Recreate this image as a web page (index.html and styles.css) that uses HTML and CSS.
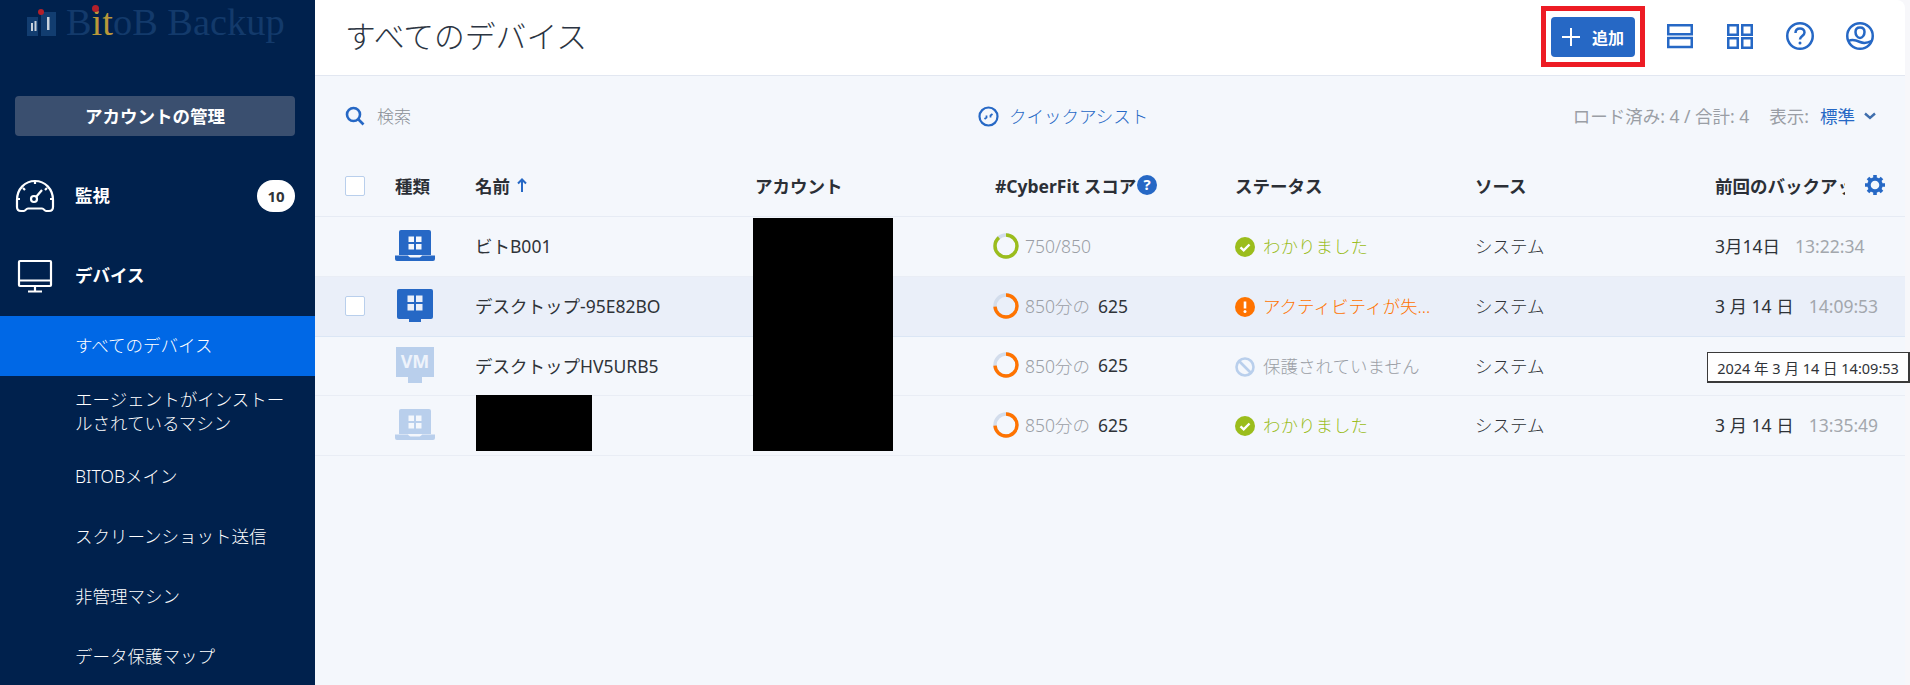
FILE: index.html
```html
<!DOCTYPE html>
<html lang="ja">
<head>
<meta charset="utf-8">
<title>すべてのデバイス</title>
<link rel="stylesheet" href="styles.css">
</head>
<body>
<svg class="defs" width="0" height="0">
  <symbol id="laptop" viewBox="0 0 40 31">
    <path d="M4 2a2 2 0 0 1 2-2h28a2 2 0 0 1 2 2v23H4z" fill="currentColor"/>
    <path d="M0 25.500h13c1 1.500 2 2 3 2h8c1 0 2-.5 3-2h13V29a2 2 0 0 1-2 2H2a2 2 0 0 1-2-2z" fill="currentColor"/>
    <path d="M13.500 6.500h5.500V12h-5.500zM21 6.500h5.500V12H21zM13.500 14h5.500v5.500h-5.500zM21 14h5.500v5.500H21z" fill="#f4f7fc"/>
  </symbol>
  <symbol id="ok" viewBox="0 0 20 20">
    <circle cx="10" cy="10" r="10" fill="#9bbd1c"/>
    <path d="M5.500 10.300l3.200 3 5.800-5.800" fill="none" stroke="#fff" stroke-width="2.400"/>
  </symbol>
  <symbol id="ring" viewBox="0 0 26 26">
    <circle cx="13" cy="13" r="11" fill="none" stroke="#d3ddec" stroke-width="3.400"/>
    <circle cx="13" cy="13" r="11" fill="none" stroke="#ff7300" stroke-width="3.400" stroke-dasharray="50.800 69.100" transform="rotate(-90 13 13)"/>
  </symbol>
</svg>
<div class="app">
  <aside class="sidebar">
    <div class="logo">
      <svg class="logo-mark" width="30" height="30" viewBox="0 0 30 30">
        <rect x="0" y="11" width="11" height="19" fill="#123d70"/>
        <rect x="14" y="6" width="15" height="24" fill="#123d70"/>
        <circle cx="14" cy="6" r="3" fill="#b3202a"/>
        <rect x="4" y="17" width="2" height="8" fill="#c8d2dc"/>
        <rect x="7.500" y="15" width="2" height="10" fill="#c8d2dc"/>
        <rect x="20" y="11" width="2.500" height="13" fill="#c8d2dc"/>
      </svg>
      <span class="logo-text">B<span class="logo-gold">it</span>oB Backup<i class="logo-dot"></i></span>
    </div>
    <button class="account-btn"><span>アカウントの管理</span></button>
    <nav class="nav">
      <div class="nav-main">
        <svg class="nav-icon" width="40" height="34" viewBox="0 0 40 34" fill="none" stroke="#fff" stroke-width="2.200">
          <path d="M9 32H6c-2.500 0-4-1.500-4-4v-7C2 10 10 2 20 2s18 8 18 19v7c0 2.500-1.500 4-4 4h-3c-1.500 0-2-2.500-4-2.500H13C11 29.500 10.500 32 9 32z"/>
          <circle cx="19" cy="20" r="3"/>
          <path d="M21 18l6-7M20 2v3M2 20h3M35 20h3M8 9l2 2M32 9l-2 2"/>
        </svg>
        <span class="nav-label">監視</span>
        <span class="badge">10</span>
      </div>
      <div class="nav-main">
        <svg class="nav-icon" width="40" height="34" viewBox="0 0 40 34" fill="none" stroke="#fff" stroke-width="2.200">
          <rect x="4" y="2" width="32" height="25" rx="1"/>
          <path d="M4 21.500h32M20 27v5M13 32.500h14"/>
        </svg>
        <span class="nav-label">デバイス</span>
      </div>
      <a class="nav-sub active">すべてのデバイス</a>
      <a class="nav-sub tall">エージェントがインストールされているマシン</a>
      <a class="nav-sub">BITOBメイン</a>
      <a class="nav-sub">スクリーンショット送信</a>
      <a class="nav-sub">非管理マシン</a>
      <a class="nav-sub">データ保護マップ</a>
    </nav>
  </aside>

  <main class="main">
    <header class="topbar">
      <h1 class="title">すべてのデバイス</h1>
      <div class="top-actions">
        <div class="highlight">
          <button class="add-btn">
            <svg width="18" height="18" viewBox="0 0 18 18"><path d="M9 0v18M0 9h18" stroke="#fff" stroke-width="2"/></svg>
            <span>追加</span>
          </button>
        </div>
        <svg class="top-icon" width="30" height="30" viewBox="0 0 30 30" fill="none" stroke="#2668c5" stroke-width="2.500">
          <rect x="3.250" y="4.250" width="23.500" height="9"/><rect x="3.250" y="17" width="23.500" height="9"/>
        </svg>
        <svg class="top-icon" width="30" height="30" viewBox="0 0 30 30" fill="none" stroke="#2668c5" stroke-width="2.500">
          <rect x="3.250" y="4.250" width="9.500" height="9.500"/><rect x="17.250" y="4.250" width="9.500" height="9.500"/>
          <rect x="3.250" y="17.250" width="9.500" height="9.500"/><rect x="17.250" y="17.250" width="9.500" height="9.500"/>
        </svg>
        <svg class="top-icon" width="30" height="30" viewBox="0 0 30 30" fill="none" stroke="#2668c5" stroke-width="2.500">
          <circle cx="15" cy="15" r="12.750"/>
          <path d="M10.500 12c0-3 2-4.500 4.500-4.500s4.500 1.500 4.500 4c0 3.500-4.500 3.500-4.500 7"/>
          <circle cx="15" cy="22" r="1.500" fill="#2668c5" stroke="none"/>
        </svg>
        <svg class="top-icon" width="30" height="30" viewBox="0 0 30 30" fill="none" stroke="#2668c5" stroke-width="2.500">
          <circle cx="15" cy="15" r="12.750"/>
          <path d="M15 6.500c-3 0-4.500 2-4.500 4.500 0 3 2 6 4.500 6s4.500-3 4.500-6c0-2.500-1.500-4.500-4.500-4.500z"/>
          <path d="M3.500 20c4-2 7-1 11.500 1s7.500 1 11.500-1"/>
        </svg>
      </div>
    </header>

    <section class="toolbar">
      <div class="search">
        <svg width="20" height="20" viewBox="0 0 20 20" fill="none" stroke="#2668c5" stroke-width="2.600">
          <circle cx="8.500" cy="8.500" r="6.500"/><path d="M13 13l5.500 5.500"/>
        </svg>
        <span>検索</span>
      </div>
      <div class="quick">
        <svg width="21" height="21" viewBox="0 0 21 21" fill="none" stroke="#2668c5" stroke-width="2.200">
          <circle cx="10.500" cy="10.500" r="9"/>
          <path d="M6.500 13l2-1.500V9.500M14.500 8l-2 1.500v2" stroke-width="1.800"/>
        </svg>
        <span>クイックアシスト</span>
      </div>
      <div class="summary">
        <span class="loaded">ロード済み: 4 / 合計: 4</span>
        <span class="view">表示:</span>
        <span class="view-value">標準</span>
        <svg width="12" height="8" viewBox="0 0 12 8" fill="none" stroke="#3f6ead" stroke-width="2.400"><path d="M1 1.500l5 4.500 5-4.500"/></svg>
      </div>
    </section>

    <section class="table">
      <div class="row head">
        <div class="cell"><span class="check"></span></div>
        <div class="cell">種類</div>
        <div class="cell">名前
          <svg class="sort" width="10" height="14" viewBox="0 0 10 14" fill="none" stroke="#2668c5" stroke-width="2"><path d="M5 14V2M1 5.500l4-4 4 4"/></svg>
        </div>
        <div class="cell">アカウント</div>
        <div class="cell">#CyberFit スコア
          <svg class="help" width="20" height="20" viewBox="0 0 20 20"><circle cx="10" cy="10" r="10" fill="#2668c5"/><text x="10" y="15" class="help-mark">?</text></svg>
        </div>
        <div class="cell">ステータス</div>
        <div class="cell">ソース</div>
        <div class="cell last-head">
          <span class="clip">前回のバックアップ</span>
          <svg class="gear" width="20" height="20" viewBox="0 0 20 20">
            <circle cx="10" cy="10" r="6" fill="none" stroke="#2668c5" stroke-width="3.400"/>
            <path d="M10 0v20M0 10h20M3 3l14 14M17 3L3 17" stroke="#2668c5" stroke-width="3.600" stroke-dasharray="3.600 12.800 3.600"/>
          </svg>
        </div>
      </div>

      <div class="row">
        <div class="cell"></div>
        <div class="cell"><svg class="type laptop-dark" width="40" height="31"><use href="#laptop"/></svg></div>
        <div class="cell">ビトB001</div>
        <div class="cell"></div>
        <div class="cell">
          <svg class="ring" width="26" height="26" viewBox="0 0 26 26">
            <circle cx="13" cy="13" r="11" fill="none" stroke="#d3ddec" stroke-width="3.400"/>
            <circle cx="13" cy="13" r="11" fill="none" stroke="#9bbd1c" stroke-width="3.400" stroke-dasharray="61 69.100" transform="rotate(-90 13 13)"/>
          </svg>
          <span class="muted">750/850</span>
        </div>
        <div class="cell"><svg class="st-icon" width="20" height="20"><use href="#ok"/></svg><span class="green">わかりました</span></div>
        <div class="cell thin">システム</div>
        <div class="cell">3月14日<span class="time">13:22:34</span></div>
      </div>

      <div class="row hover">
        <div class="cell"><span class="check"></span></div>
        <div class="cell">
          <svg class="type type-desktop" width="36" height="33" viewBox="0 0 36 33">
            <path d="M2 0h32a2 2 0 0 1 2 2v26a2 2 0 0 1-2 2H2a2 2 0 0 1-2-2V2a2 2 0 0 1 2-2z" fill="#2668c5"/>
            <path d="M12 28h12v5H12z" fill="#2668c5"/>
            <path d="M10.500 6.500H17V13h-6.500zM19 6.500h6.500V13H19zM10.500 15H17v6.500h-6.500zM19 15h6.500v6.500H19z" fill="#eaeff9"/>
          </svg>
        </div>
        <div class="cell">デスクトップ-95E82BO</div>
        <div class="cell"></div>
        <div class="cell"><svg class="ring" width="26" height="26"><use href="#ring"/></svg><span class="muted">850分の</span><span class="score">625</span></div>
        <div class="cell">
          <svg class="st-icon" width="20" height="20" viewBox="0 0 20 20"><circle cx="10" cy="10" r="10" fill="#ff7300"/><path d="M10 4.500v7" stroke="#fff" stroke-width="2.600"/><circle cx="10" cy="14.500" r="1.500" fill="#fff"/></svg>
          <span class="orange">アクティビティが失...</span>
        </div>
        <div class="cell thin">システム</div>
        <div class="cell">3 月 14 日<span class="time">14:09:53</span></div>
      </div>

      <div class="row short">
        <div class="cell"></div>
        <div class="cell">
          <svg class="type type-vm" width="38" height="36" viewBox="0 0 38 36">
            <path d="M0 0h38v30H0z" fill="#b9cfec"/>
            <path d="M12 30h14v6H12z" fill="#b9cfec"/>
            <text x="19" y="21" class="vm-mark">VM</text>
          </svg>
        </div>
        <div class="cell">デスクトップHV5URB5</div>
        <div class="cell"></div>
        <div class="cell"><svg class="ring" width="26" height="26"><use href="#ring"/></svg><span class="muted">850分の</span><span class="score">625</span></div>
        <div class="cell">
          <svg class="st-icon" width="20" height="20" viewBox="0 0 20 20" fill="none" stroke="#b9cfec" stroke-width="2.600"><circle cx="10" cy="10" r="8.500"/><path d="M4 4l12 12"/></svg>
          <span class="muted">保護されていません</span>
        </div>
        <div class="cell thin">システム</div>
        <div class="cell"></div>
      </div>

      <div class="row">
        <div class="cell"></div>
        <div class="cell"><svg class="type laptop-light" width="40" height="31"><use href="#laptop"/></svg></div>
        <div class="cell"></div>
        <div class="cell"></div>
        <div class="cell"><svg class="ring" width="26" height="26"><use href="#ring"/></svg><span class="muted">850分の</span><span class="score">625</span></div>
        <div class="cell"><svg class="st-icon" width="20" height="20"><use href="#ok"/></svg><span class="green">わかりました</span></div>
        <div class="cell thin">システム</div>
        <div class="cell">3 月 14 日<span class="time">13:35:49</span></div>
      </div>

      <div class="redact redact-account"></div>
      <div class="redact redact-name"></div>
    </section>

    <div class="tooltip">2024 年 3 月 14 日 14:09:53</div>
  </main>
</div>
</body>
</html>
```

FILE: styles.css
```css
* { box-sizing: border-box; }
html, body { margin: 0; height: 100%; overflow: hidden; }
body {
  background: #f7f7fa;
  color: #2f3338;
  font-family: "Noto Sans", "Noto Sans CJK JP", sans-serif;
  font-size: 17.5px;
}
.defs { position: absolute; }
.app { display: flex; height: 685px; }

/* Sidebar */
.sidebar { width: 315px; flex: none; background: #00214d; color: #fff; }
.logo { height: 96px; padding: 2px 0 0 27px; display: flex; align-items: flex-start; gap: 9px; }
.logo-mark { margin-top: 4px; flex: none; }
.logo-text {
  position: relative;
  font-family: "Liberation Serif", serif;
  font-size: 38.400px;
  line-height: 40px;
  color: #133a6b;
}
.logo-gold { color: #b9983a; }
.logo-dot {
  position: absolute; left: 26px; top: 3px;
  width: 7px; height: 7px; border-radius: 50%;
  background: #b3202a;
}
.account-btn {
  display: block;
  width: 280px; height: 40px;
  margin: 0 0 0 15px;
  padding: 0 0 2px;
  border: 0; border-radius: 4px;
  background: #3a4f6f; color: #fff;
  font: 700 17.5px "Noto Sans", "Noto Sans CJK JP", sans-serif;
}
.nav { margin-top: 20px; }
.nav-main { height: 80px; display: flex; align-items: center; padding: 0 20px 0 15px; }
.nav-icon { flex: none; }
.nav-label { margin-left: 20px; padding-bottom: 4px; font-weight: 700; flex: 1; }
.badge {
  width: 38px; height: 32px; border-radius: 16px;
  background: #fff; color: #2f3338;
  font-size: 15px; font-weight: 700;
  display: flex; align-items: center; justify-content: center;
}
.nav-sub {
  display: flex; align-items: center;
  height: 60px; padding: 0 20px 2px 75px;
  color: #fff; line-height: 24px; font-weight: 300;
}
.nav-sub.tall { height: 71px; }
.nav-sub.active { background: #0068e6; }

/* Main */
.main { position: relative; width: 1590px; background: #f4f7fc; border-top-right-radius: 8px; }
.topbar {
  height: 76px; padding: 0 30px 3px 30px;
  display: flex; align-items: center; justify-content: space-between;
  background: #fff; border-bottom: 1px solid #e2e7f1;
  border-top-right-radius: 8px;
}
.title { margin: 0; font-size: 30.800px; font-weight: 300; color: #2b3442; line-height: 40px; }
.top-actions { display: flex; align-items: center; gap: 30px; }
.highlight { border: 5px solid #ed1c24; padding: 6px 5px 5px; margin-right: -10px; }
.add-btn {
  width: 84px; height: 40px;
  display: flex; align-items: center; gap: 12px;
  padding: 0 0 0 11px;
  border: 0; border-radius: 4px;
  background: #2668c5; color: #fff;
  font: 700 16px "Noto Sans", "Noto Sans CJK JP", sans-serif;
}
.top-icon { flex: none; }

.toolbar { height: 80px; padding: 0 30px; display: flex; align-items: center; }
.toolbar span { padding-bottom: 2px; }
.search { display: flex; align-items: center; gap: 12px; color: #8a8f96; width: 633px; font-size: 17px; font-weight: 300; }
.quick { display: flex; align-items: center; gap: 10px; color: #2668c5; font-weight: 300; }
.summary { margin-left: auto; display: flex; align-items: center; color: #9a9ea5; }
.view { margin-left: 20px; }
.view-value { margin-left: 11px; color: #2668c5; }
.summary svg { margin-left: 9px; margin-right: -1px; }

/* Table */
.table { position: relative; }
.row {
  height: 60px;
  padding-bottom: 2px;
  display: grid;
  grid-template-columns: 80px 80px 280px 240px 240px 240px 240px 190px;
  align-items: center;
  border-bottom: 1px solid #e9edf5;
}
.row.head { height: 61px; font-weight: 700; color: #2b2f36; border-bottom-color: #e6ebf4; }
.row.hover { background: #eaeff9; border-bottom-color: #dbe6f5; }
.row.short { height: 59px; }
.cell { display: flex; align-items: center; white-space: nowrap; min-width: 0; }
.cell:first-child { padding-left: 30px; }
.thin { font-weight: 300; }
.check {
  display: block; width: 20px; height: 20px;
  background: #fff; border: 1px solid #b9cfec; border-radius: 2px;
}
.head .check { margin-top: 2px; }
.sort { margin-left: 7px; }
.help { margin-left: 1px; }
.help-mark { font: 700 15px "Noto Sans", sans-serif; fill: #fff; text-anchor: middle; }
.last-head { position: relative; }
.clip { display: block; width: 130px; overflow: hidden; }
.gear { position: absolute; left: 150px; top: 50%; margin-top: -10px; }
.type { display: block; }
.type-desktop { margin-left: 2px; }
.type-vm { margin-left: 1px; }
.laptop-dark { color: #2668c5; }
.laptop-light { color: #b9cfec; }
.vm-mark { font: 700 18px "Noto Sans", sans-serif; fill: #eef3fb; text-anchor: middle; }
.ring { margin-left: -2px; margin-right: 6px; flex: none; }
.muted { color: #9a9ea5; font-weight: 300; }
.score { margin-left: 8px; color: #2f3338; }
.st-icon { flex: none; margin-right: 8px; margin-top: 3px; }
.green { color: #9bbd1c; font-weight: 300; }
.orange { color: #ff7300; font-weight: 300; }
.time { margin-left: 15px; color: #a3a7ad; }

.redact { position: absolute; background: #000; }
.redact-account { left: 438px; top: 62px; width: 140px; height: 233px; }
.redact-name { left: 161px; top: 239px; width: 116px; height: 56px; }

.tooltip {
  position: absolute; left: 1392px; top: 352px;
  width: 203px; height: 31px;
  display: flex; align-items: center; justify-content: center;
  background: #fff; border: 2px solid #3a3a3a; border-width: 1px 2px 2px 1px;
  font-size: 14.500px; color: #2f3338; white-space: nowrap;
}
```
